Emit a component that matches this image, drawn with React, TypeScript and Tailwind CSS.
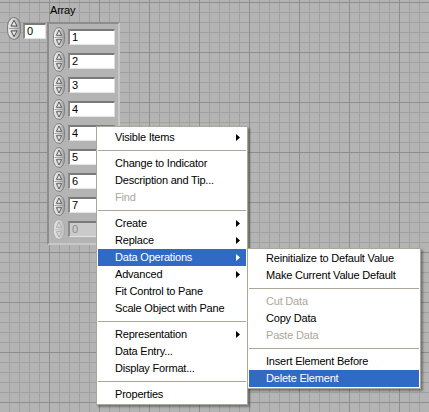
import React from "react";

type Item =
  | { sep: true }
  | { sep?: false; t: string; arrow?: boolean; disabled?: boolean; hi?: boolean };

const mainItems: Item[] = [
  { t: "Visible Items", arrow: true },
  { sep: true },
  { t: "Change to Indicator" },
  { t: "Description and Tip..." },
  { t: "Find", disabled: true },
  { sep: true },
  { t: "Create", arrow: true },
  { t: "Replace", arrow: true },
  { t: "Data Operations", arrow: true, hi: true },
  { t: "Advanced", arrow: true },
  { t: "Fit Control to Pane" },
  { t: "Scale Object with Pane" },
  { sep: true },
  { t: "Representation", arrow: true },
  { t: "Data Entry..." },
  { t: "Display Format..." },
  { sep: true },
  { t: "Properties" },
];

const subItems: Item[] = [
  { t: "Reinitialize to Default Value" },
  { t: "Make Current Value Default" },
  { sep: true },
  { t: "Cut Data", disabled: true },
  { t: "Copy Data" },
  { t: "Paste Data", disabled: true },
  { sep: true },
  { t: "Insert Element Before" },
  { t: "Delete Element", hi: true },
];

function Arrow({ white }: { white?: boolean }) {
  return (
    <svg width="4" height="7" viewBox="0 0 4 7" className="shrink-0">
      <path d="M0 0 L4 3.5 L0 7 Z" fill={white ? "#ffffff" : "#000000"} />
    </svg>
  );
}

function Menu({ items }: { items: Item[] }) {
  return (
    <div className="flex flex-col">
      {items.map((it, i) =>
        it.sep ? (
          <div key={i} className="h-[9px] flex items-center">
            <div className="h-px w-full bg-[#aca899]" />
          </div>
        ) : (
          <div
            key={i}
            className={
              "h-[17px] flex items-center justify-between pl-[17px] pr-[6px] " +
              (it.hi ? "bg-[#316ac5] text-white" : it.disabled ? "text-[#aca899]" : "text-black")
            }
          >
            <span className="whitespace-nowrap">{it.t}</span>
            {it.arrow && <Arrow white={it.hi} />}
          </div>
        )
      )}
    </div>
  );
}

function Inc({ w, h, disabled }: { w: number; h: number; disabled?: boolean }) {
  const gid = disabled ? "incd" : "inc";
  const stroke = disabled ? "#a8a8a8" : "#7c7c7c";
  const arrow = disabled ? "#a0a0a0" : "#3c3c3c";
  return (
    <svg width={w} height={h} viewBox="0 0 12 21" preserveAspectRatio="none" className="shrink-0">
      <defs>
        <linearGradient id={gid} x1="0" y1="0" x2="1" y2="0">
          <stop offset="0" stopColor={disabled ? "#e4e4e4" : "#f2f2f2"} />
          <stop offset="0.55" stopColor={disabled ? "#d2d2d2" : "#d0d0d0"} />
          <stop offset="1" stopColor={disabled ? "#bdbdbd" : "#9c9c9c"} />
        </linearGradient>
      </defs>
      <rect x="0.5" y="0.5" width="11" height="20" rx="5.5" ry="8" fill={`url(#${gid})`} stroke={stroke} strokeWidth="0.9" />
      <line x1="1.5" y1="10.5" x2="10.5" y2="10.5" stroke={disabled ? "#bcbcbc" : "#9a9a9a"} strokeWidth="0.8" />
      <path d="M6 3 L8.6 8.3 L3.4 8.3 Z" fill={disabled ? "#dcdcdc" : "#e6e6e6"} stroke={arrow} strokeWidth="0.8" />
      <path d="M3.4 12.7 L8.6 12.7 L6 18 Z" fill={disabled ? "#dcdcdc" : "#e6e6e6"} stroke={arrow} strokeWidth="0.8" />
    </svg>
  );
}

function NumBox({ v, w, disabled }: { v: string; w: string; disabled?: boolean }) {
  return (
    <div
      className={
        "h-[16px] border-t-2 border-l-2 border-r border-b border-t-[#7a7a7a] border-l-[#8a8a8a] border-r-[#dcdcdc] border-b-[#e4e4e4] pl-[2px] text-[11px] leading-[12px] " +
        w +
        (disabled ? " bg-[#cacaca] text-[#8c8c8c]" : " bg-white text-black")
      }
    >
      {v}
    </div>
  );
}

export default function App() {
  const values = ["1", "2", "3", "4", "4", "5", "6", "7"];
  return (
    <div
      className="relative w-[429px] h-[412px] overflow-hidden bg-[#b4b4b4] [background-image:linear-gradient(to_right,#8e8e8e_1px,transparent_1px),linear-gradient(to_bottom,#8e8e8e_1px,transparent_1px),linear-gradient(to_right,#a1a1a1_1px,transparent_1px),linear-gradient(to_bottom,#a1a1a1_1px,transparent_1px)] [background-size:50px_50px,50px_50px,10px_10px,10px_10px] [background-position:49px_2px,49px_2px,9px_2px,9px_2px] text-[11px] tracking-[-0.2px]"
      style={{ fontFamily: '"Liberation Sans", Arial, sans-serif' }}
    >
      {/* Index control */}
      <div className="absolute left-[7px] top-[17px] flex items-start gap-[2px]">
        <Inc w={14} h={23} />
        <div className="mt-[6px]">
          <NumBox v="0" w="w-[23px]" />
        </div>
      </div>

      {/* Array label */}
      <div className="absolute left-[50px] top-[4px] text-black leading-[13px]">Array</div>

      {/* Array frame */}
      <div className="absolute left-[47px] top-[22px] w-[73px] h-[223px] bg-[#b4b4b4] border-2 border-t-[#8c8c8c] border-l-[#8c8c8c] border-r-[#c8c8c8] border-b-[#c8c8c8] pl-[4px] pt-[1px]">
        <div className="flex flex-col">
          {values.map((v, i) => (
            <div key={i} className="h-[24px] flex items-center gap-[3px]">
              <Inc w={12} h={21} />
              <NumBox v={v} w="w-[47px]" />
            </div>
          ))}
          <div className="h-[24px] flex items-center gap-[3px]">
            <Inc w={12} h={21} disabled />
            <NumBox v="0" w="w-[47px]" disabled />
          </div>
        </div>
      </div>

      {/* Main context menu */}
      <div className="absolute left-[96px] top-[126px] w-[152px] bg-white border border-[#aca899] p-[1px] pt-[2px] shadow-[2px_2px_2px_rgba(0,0,0,0.35)]">
        <Menu items={mainItems} />
      </div>

      {/* Submenu */}
      <div className="absolute left-[247px] top-[248px] w-[174px] bg-white border border-[#aca899] p-[1px] shadow-[2px_2px_2px_rgba(0,0,0,0.35)]">
        <Menu items={subItems} />
      </div>
    </div>
  );
}
